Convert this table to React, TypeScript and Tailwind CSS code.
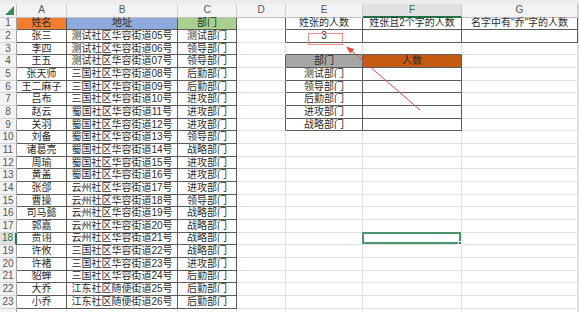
import React from 'react';

const colLetters = ['A', 'B', 'C', 'D', 'E', 'F', 'G', ''];

const people: string[][] = [
  ['姓名', '地址', '部门'],
  ['张三', '测试社区华容街道05号', '测试部门'],
  ['李四', '测试社区华容街道06号', '领导部门'],
  ['王五', '测试社区华容街道07号', '领导部门'],
  ['张天师', '三国社区华容街道08号', '后勤部门'],
  ['王二麻子', '三国社区华容街道09号', '后勤部门'],
  ['吕布', '三国社区华容街道10号', '进攻部门'],
  ['赵云', '蜀国社区华容街道11号', '进攻部门'],
  ['关羽', '蜀国社区华容街道12号', '进攻部门'],
  ['刘备', '蜀国社区华容街道13号', '领导部门'],
  ['诸葛亮', '蜀国社区华容街道14号', '战略部门'],
  ['周瑜', '蜀国社区华容街道15号', '进攻部门'],
  ['黄盖', '蜀国社区华容街道16号', '进攻部门'],
  ['张郃', '云州社区华容街道17号', '进攻部门'],
  ['曹操', '云州社区华容街道18号', '领导部门'],
  ['司马懿', '云州社区华容街道19号', '战略部门'],
  ['郭嘉', '云州社区华容街道20号', '战略部门'],
  ['贾诩', '云州社区华容街道21号', '战略部门'],
  ['许攸', '三国社区华容街道22号', '战略部门'],
  ['许褚', '三国社区华容街道23号', '进攻部门'],
  ['貂蝉', '三国社区华容街道24号', '后勤部门'],
  ['大乔', '江东社区随便街道25号', '后勤部门'],
  ['小乔', '江东社区随便街道26号', '后勤部门'],
];

// side tables in E:G
const extra: Record<string, string> = {
  '1-5': '姓张的人数',
  '1-6': '姓张且2个字的人数',
  '1-7': '名字中有"乔"字的人数',
  '2-5': '3',
  '4-5': '部门',
  '4-6': '人数',
  '5-5': '测试部门',
  '6-5': '领导部门',
  '7-5': '后勤部门',
  '8-5': '进攻部门',
  '9-5': '战略部门',
};

const fills: Record<string, string> = {
  '1-1': 'bg-[#f07e2e]',
  '1-2': 'bg-[#8eaadc]',
  '1-3': 'bg-[#a9d08e]',
  '4-5': 'bg-[#a6a6a6]',
  '4-6': 'bg-[#c55a11]',
};

// bordered ranges: [r1, c1, r2, c2]
const boxes = [
  [1, 1, 23, 3],
  [1, 5, 2, 7],
  [4, 5, 9, 6],
];

function inBox(r: number, c: number) {
  return boxes.some(([r1, c1, r2, c2]) => r >= r1 && r <= r2 && c >= c1 && c <= c2);
}

function cellText(r: number, c: number) {
  if (c >= 1 && c <= 3 && people[r - 1]) return people[r - 1][c - 1];
  return extra[`${r}-${c}`] ?? '';
}

export default function App() {
  const rows = Array.from({ length: 24 }, (_, i) => i + 1);

  return (
    <div
      className="relative w-[579px] h-[312px] overflow-hidden bg-white text-[#2b2b2b] text-[10px] leading-none"
      style={{ fontFamily: '"Liberation Sans", "Noto Sans CJK SC", sans-serif' }}
    >
      <div className="grid grid-cols-[17px_50px_111px_59px_49px_77px_99px_116px_1fr] grid-rows-[3.5px_14px_repeat(24,12.67px)]">
        {/* top strip */}
        <div className="col-span-9 bg-[#ececec]" />

        {/* column headers */}
        <div className="relative bg-[#f3f3f3] border-r border-b border-[#c9c9c9]">
          <div className="absolute right-[2px] bottom-[2px] w-0 h-0 border-l-[9px] border-l-transparent border-b-[9px] border-b-[#3a8a52]" />
        </div>
        {colLetters.map((l, i) =>
          l === 'F' ? (
            <div key={i} className="flex items-center justify-center bg-[#e1e1e1] text-[#217346] border-r border-[#c9c9c9] border-b-2 border-b-[#217346]">
              {l}
            </div>
          ) : (
            <div key={i} className="flex items-center justify-center bg-[#f3f3f3] text-[#555] border-r border-b border-[#d0d0d0] border-b-[#c0c0c0]">
              {l}
            </div>
          )
        )}

        {rows.map(r => (
          <React.Fragment key={r}>
            {r === 18 ? (
              <div className="flex items-center justify-center bg-[#e1e1e1] text-[#217346] border-b border-[#d0d0d0] border-r-2 border-r-[#217346]">
                {r}
              </div>
            ) : (
              <div className="flex items-center justify-center bg-[#f3f3f3] text-[#555] border-b border-[#d4d4d4] border-r border-r-[#a0a0a0]">
                {r < 24 ? r : ''}
              </div>
            )}
            {[1, 2, 3, 4, 5, 6, 7, 8].map(c => {
              const rightDark = inBox(r, c) || inBox(r, c + 1);
              const bottomDark = inBox(r, c) || inBox(r + 1, c);
              const selected = r === 18 && c === 6;
              return (
                <div
                  key={c}
                  className={[
                    'relative flex items-center justify-center whitespace-nowrap overflow-visible border-r border-b',
                    rightDark ? 'border-r-[#5c5c5c]' : 'border-r-[#e0e0e0]',
                    bottomDark ? 'border-b-[#5c5c5c]' : 'border-b-[#e0e0e0]',
                    fills[`${r}-${c}`] ?? '',
                  ].join(' ')}
                >
                  {cellText(r, c)}
                  {selected && (
                    <div className="absolute -left-[1px] -top-[1px] right-0 bottom-0 border-2 border-[#4e9470]">
                      <div className="absolute -right-[3px] -bottom-[3px] w-[4px] h-[4px] bg-[#217346] border border-white" />
                    </div>
                  )}
                </div>
              );
            })}
          </React.Fragment>
        ))}
      </div>

      {/* annotation: red box around E2 and arrow */}
      <div className="absolute left-[308px] top-[33px] w-[35px] h-[12px] border border-[#ef8c8c]" />
      <svg className="absolute left-0 top-0 pointer-events-none" width="579" height="312" viewBox="0 0 579 312">
        <line x1="420" y1="110" x2="350" y2="49.5" stroke="#e8473f" strokeWidth="1" />
        <polygon points="346,46.5 350.1,53.6 354.2,48.9" fill="#e8473f" />
      </svg>
    </div>
  );
}
